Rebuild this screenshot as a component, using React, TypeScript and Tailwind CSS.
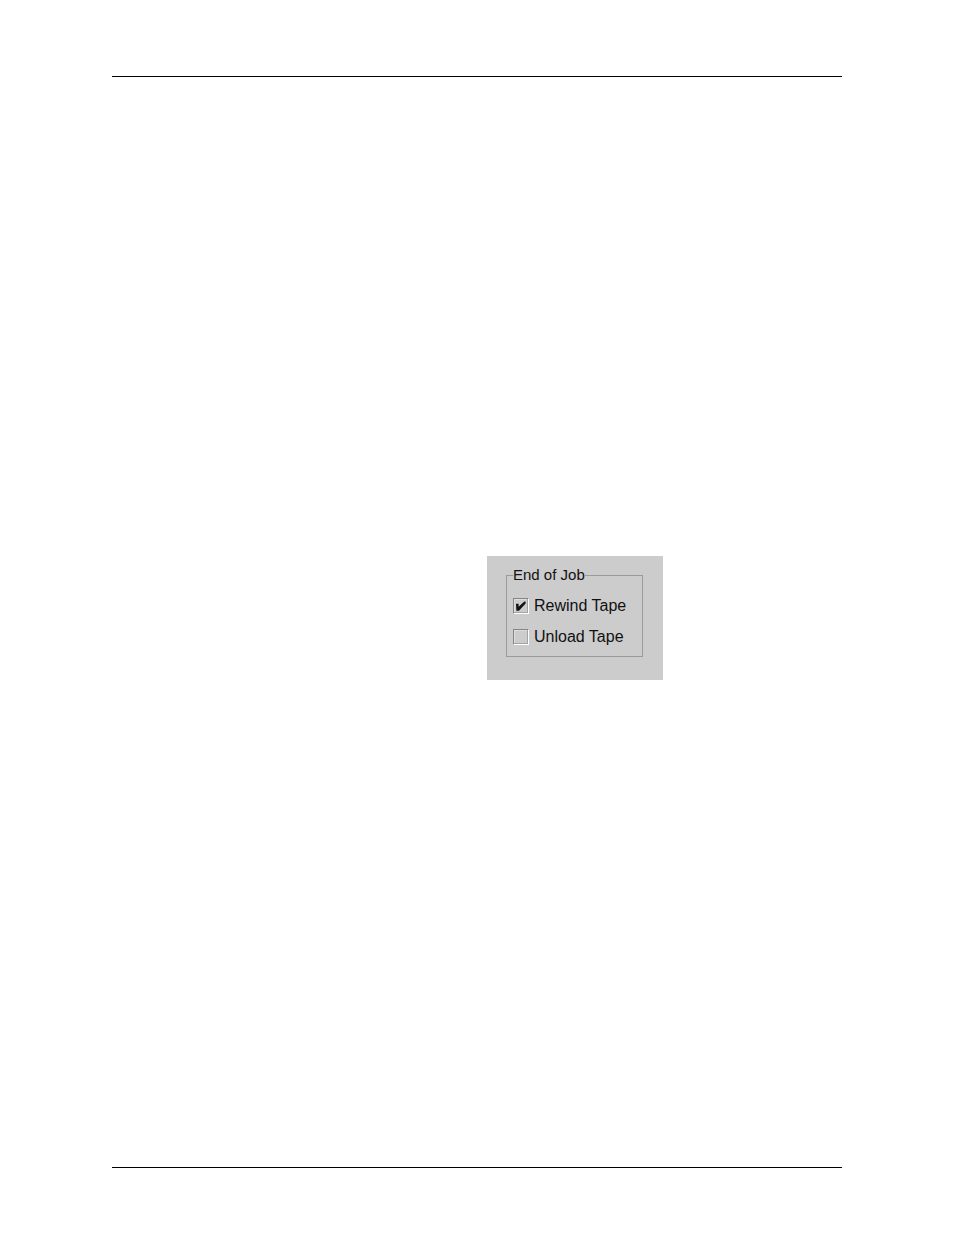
import { useState } from "react";

type OptionProps = {
  label: string;
  defaultChecked?: boolean;
};

function Option({ label, defaultChecked = false }: OptionProps) {
  const [checked, setChecked] = useState(defaultChecked);
  return (
    <label className="flex h-5 items-center gap-[5px] text-base leading-5 whitespace-nowrap">
      <span className="grid size-4 shrink-0">
        <input
          type="checkbox"
          checked={checked}
          onChange={(event) => setChecked(event.target.checked)}
          className="col-start-1 row-start-1 size-4 appearance-none border border-t-[#858585] border-r-white border-b-white border-l-[#858585] bg-[#cccccc] shadow-[inset_-1px_-1px_0_#a3a3a3,inset_1px_1px_0_#dedede]"
        />
        {checked && (
          <svg
            viewBox="0 0 16 16"
            className="pointer-events-none z-10 col-start-1 row-start-1 size-4"
            aria-hidden="true"
          >
            <path d="M3 5.8H5.6V8.8L11.4 3.4H12.6V5.6L6 12.8H3.4Z" fill="#111111" />
          </svg>
        )}
      </span>
      <span>{label}</span>
    </label>
  );
}

export default function App() {
  return (
    <div className="flex min-h-screen flex-col bg-white px-28 pt-[76px] pb-[67px] font-['Liberation_Sans',Arial,sans-serif] text-[15px] leading-5 text-[#111111]">
      <hr className="border-t border-black" />
      <main className="flex flex-1 flex-col items-start pt-[479px]">
        <section className="ml-[375px] w-44 bg-[#cccccc] pt-[9px] pr-5 pb-[23px] pl-[19px]">
          <fieldset className="min-w-0 border border-[#9b9b9b] px-1.5 pt-[11px] pb-[9px]">
            <legend>End of Job</legend>
            <div className="flex flex-col gap-[11px]">
              <Option label="Rewind Tape" defaultChecked />
              <Option label="Unload Tape" />
            </div>
          </fieldset>
        </section>
      </main>
      <hr className="border-t border-black" />
    </div>
  );
}
